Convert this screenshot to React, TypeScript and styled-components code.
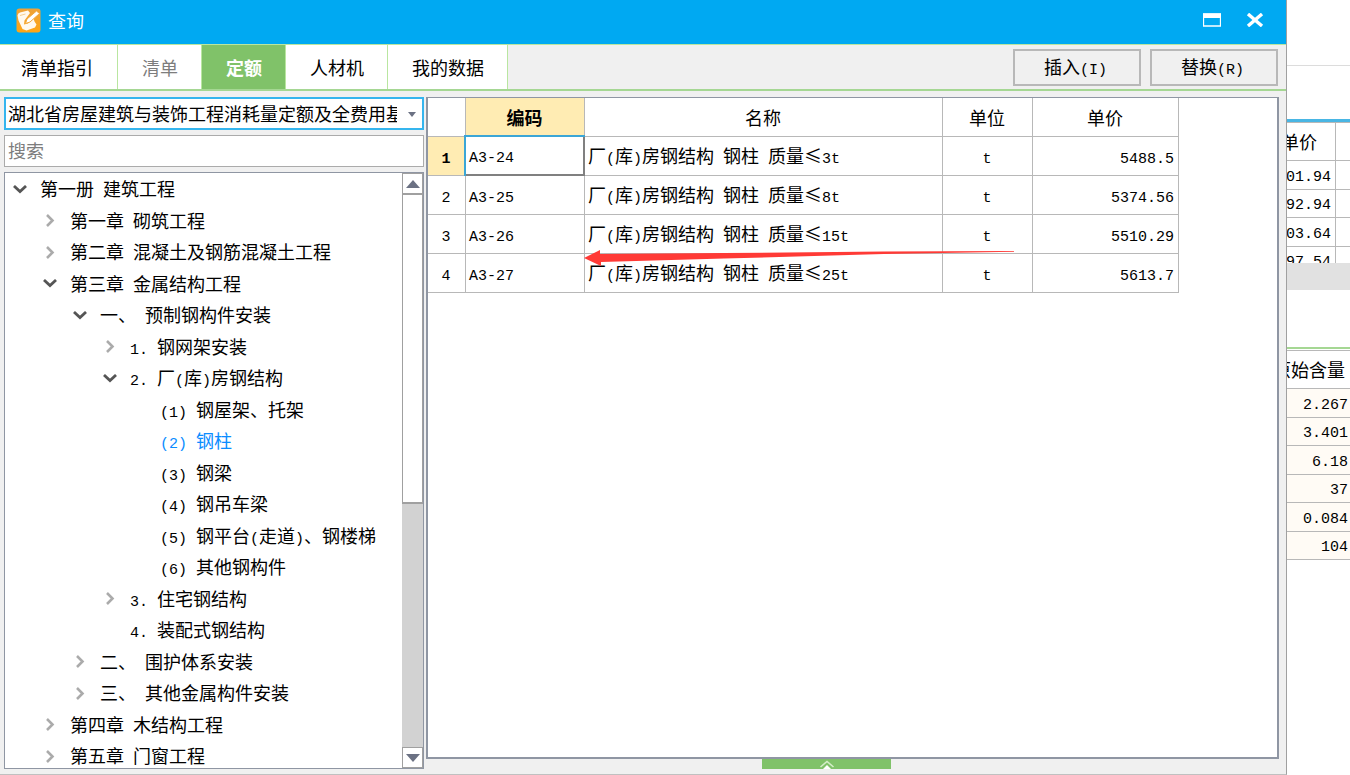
import React from 'react';
import styled, { createGlobalStyle, css } from 'styled-components';

const c = {
  blue: '#00a9f2',
  green: '#80c269',
  lightGreen: '#b9e6a0',
  face: '#f0f0f0',
  line: '#b8b8b8',
  frame: '#8f96a3',
  ink: '#000',
};

const cjk = '"Noto Sans CJK SC", sans-serif';
const mono = '"Liberation Mono", monospace';

const Global = createGlobalStyle`
  *, *::before, *::after { box-sizing: border-box; }
  body { margin: 0; background: #fff; color: ${c.ink}; font: 18px/24px ${cjk}; }
  button, input, select { font: inherit; color: inherit; border-radius: 0; margin: 0; }
`;

const Screen = styled.div`
  display: grid;
  grid-template-columns: minmax(0, 1fr) 63px;
  height: 100vh;
  overflow: hidden;
`;

const Dialog = styled.section`
  display: flex;
  flex-direction: column;
  min-width: 0;
  min-height: 0;
  background: ${c.face};
  border-right: 1px solid #a0a0a0;
  border-bottom: 1px solid #c0c0c0;
`;

const TitleBar = styled.header`
  display: flex;
  align-items: center;
  height: 44px;
  flex: none;
  padding: 0 22px 4px 16px;
  gap: 7px;
  background: ${c.blue};
  color: #fff;
`;

const Title = styled.h1`
  flex: 1;
  margin: 0;
  font-size: 18px;
  font-weight: 400;
`;

const WindowButton = styled.button`
  display: flex;
  padding: 0;
  margin-left: 18px;
  border: 0;
  background: none;
`;

const Toolbar = styled.div`
  display: flex;
  flex: none;
  height: 47px;
  border-top: 1px solid ${c.lightGreen};
  border-bottom: 2px solid #a5d793;
`;

const Tabs = styled.nav`
  display: flex;
  flex: 1;
`;

const Tab = styled.button<{ $active?: boolean; $muted?: boolean }>`
  padding: 0 23px 0 24px;
  border: 0;
  border-right: 1px solid ${c.lightGreen};
  background: #fff;
  white-space: nowrap;
  &:first-child { padding: 0 24px 0 21px; }
  ${p => p.$muted && css`color: #7d7d7d;`}
  ${p => p.$active && css`background: ${c.green}; color: #fff; font-weight: 700;`}
`;

const Actions = styled.div`
  display: flex;
  gap: 9px;
  padding: 4px 8px 3px 0;
`;

const Action = styled.button`
  width: 128px;
  padding: 2px 3px 0 0;
  border: 2px solid ${c.line};
  background: ${c.face};
`;

const Body = styled.div`
  display: grid;
  grid-template-columns: 420px minmax(0, 1fr);
  gap: 2px;
  flex: 1;
  min-height: 0;
  padding: 6px 7px 5px 4px;
`;

const Side = styled.div`
  display: flex;
  flex-direction: column;
  gap: 5px;
  min-height: 0;
`;

const SelectWrap = styled.label`
  position: relative;
  display: block;
  height: 33px;
  flex: none;

  svg { position: absolute; right: 8px; top: 15px; pointer-events: none; }
`;

const Select = styled.select`
  appearance: none;
  width: 100%;
  height: 100%;
  padding: 0 25px 2px 2px;
  border: 2px solid #35b5ee;
  outline: 0;
  background: #fff;
`;

const Search = styled.input`
  width: 100%;
  height: 32px;
  flex: none;
  padding: 0 3px 2px;
  border: 1px solid #ababab;
  outline: 0;
  background: #fff;
  &::placeholder { color: #7d7d7d; opacity: 1; }
`;

const TreePanel = styled.div`
  display: flex;
  flex: 1;
  min-height: 0;
  overflow: hidden;
  border: 1px solid ${c.frame};
  background: #fff;
`;

const Tree = styled.ul`
  display: grid;
  grid-auto-rows: 31px 32px;
  flex: 1;
  margin: 0;
  padding: 2px 0 0;
  list-style: none;
`;

const TreeRow = styled.li<{ $level: number; $selected?: boolean }>`
  display: flex;
  align-items: center;
  padding-left: ${p => 5 + p.$level * 30}px;
  white-space: nowrap;
  color: ${p => (p.$selected ? '#0a8cff' : c.ink)};
`;

const Toggle = styled.span`
  display: flex;
  align-items: center;
  justify-content: center;
  width: 20px;
  height: 20px;
  margin: 0 10px 2px 0;
`;

const ScrollBar = styled.div`
  display: flex;
  flex-direction: column;
  width: 21px;
  background: #d2d2d2;
`;

const ScrollButton = styled.button`
  display: flex;
  align-items: center;
  justify-content: center;
  flex: none;
  height: 21px;
  padding: 0;
  border: 1px solid #a0a0a0;
  background: #fff;
`;

const ScrollTrack = styled.div`
  flex: 1;
`;

const ScrollThumb = styled.div`
  height: 56%;
  border: 1px solid #a0a0a0;
  border-bottom-width: 2px;
  background: #fff;
`;

const Main = styled.div`
  display: flex;
  flex-direction: column;
  min-width: 0;
  min-height: 0;
`;

const GridPanel = styled.div`
  flex: 1;
  min-height: 0;
  border: 2px solid ${c.frame};
  border-top-width: 1px;
  background: #fff;
`;

const Grid = styled.table`
  border-collapse: separate;
  border-spacing: 0;
  table-layout: fixed;
  width: 751px;

  tr { height: 39px; }
`;

const cell = css`
  padding: 2px 4px 0 3px;
  border-right: 1px solid ${c.line};
  border-bottom: 1px solid ${c.line};
  font-weight: 400;
  white-space: nowrap;
`;

const HeadCell = styled.th<{ $width: number; $active?: boolean }>`
  ${cell}
  padding-top: 0;
  padding-bottom: 1px;
  width: ${p => p.$width}px;
  ${p => p.$active && css`background: #ffecb3; font-weight: 700;`}
`;

const RowHead = styled.th<{ $active?: boolean }>`
  ${cell}
  ${p => p.$active && css`background: #ffecb3; font-weight: 700;`}
`;

const Cell = styled.td<{ $align?: 'center' | 'right'; $focus?: boolean }>`
  ${cell}
  text-align: ${p => p.$align || 'left'};
  ${p => p.$focus && css`
    border-right: 2px solid #808080;
    border-bottom: 2px solid #808080;
    box-shadow: -1px -1px 0 1px #3ba6d6;
    clip-path: inset(-2px 0 0 -2px);
  `}
`;

const Handle = styled.button`
  display: flex;
  align-items: flex-end;
  justify-content: center;
  align-self: center;
  flex: none;
  width: 129px;
  height: 10px;
  margin-right: 53px;
  padding: 0 0 0 2px;
  border: 0;
  background: ${c.green};
`;

const Behind = styled.aside`
  display: flex;
  flex-direction: column;
  min-width: 0;
  overflow: hidden;
`;

const Ribbon = styled.div`
  flex: none;
  height: 66px;
  border-bottom: 1px solid #dcdcdc;
`;

const Blank = styled.div`
  flex: none;
  height: 53px;
`;

const Prices = styled.div`
  flex: none;
  height: 144px;
  overflow: hidden;
  border-top: 3px solid #49b6e4;
`;

const Splitter = styled.div`
  flex: none;
  height: 27px;
  background: #e1e1e1;
`;

const Gap = styled.div`
  flex: none;
  height: 57px;
`;

const Amounts = styled.div`
  border-top: 2px solid #a5d793;
  padding-top: 1px;
`;

const SmallGrid = styled.table<{ $tint?: boolean }>`
  width: 100%;
  table-layout: fixed;
  border-collapse: separate;
  border-spacing: 0;
  border-top: 1px solid ${c.line};

  tr { height: 29px; }
  tr:nth-child(even) { height: 28px; }
  thead tr { height: 38px; }
  th, td { padding: 0; border-bottom: 1px solid ${c.line}; font-weight: 400; }
  th { padding-bottom: 2px; }
  td { background: ${p => (p.$tint ? '#fffbf5' : '#fff')}; }
`;

const SideCell = styled.div<{ $pad: number }>`
  display: flex;
  align-items: center;
  justify-content: flex-end;
  height: 27px;
  padding-right: ${p => p.$pad}px;
  overflow: hidden;
  white-space: nowrap;
`;

const Edge = styled.col`
  width: 14px;
`;

const PriceTable = styled(SmallGrid)`
  th:first-child, td:first-child { border-right: 1px solid ${c.line}; }
`;

const Half = styled.span`
  font-family: ${mono};
  font-size: 15px;
  white-space: pre;
`;

/* Half-width characters take exactly half the advance of a Chinese one. */
function Text({ children }: { children: string }) {
  return (
    <span>
      {children.split(/([\x20-\x7e]+)/).filter(Boolean).map((part, i) =>
        /^[\x20-\x7e]/.test(part) ? <Half key={i}>{part}</Half> : <span key={i}>{part}</span>,
      )}
    </span>
  );
}

function AppIcon() {
  return (
    <svg width="25" height="25" viewBox="0 0 25 25" aria-hidden="true">
      <defs>
        <linearGradient id="badge" x1="0" y1="0" x2="0" y2="1">
          <stop offset="0" stopColor="#eda239" />
          <stop offset="1" stopColor="#ffa514" />
        </linearGradient>
      </defs>
      <rect x="0.5" y="0.5" width="24" height="24" rx="3" fill="url(#badge)" />
      <path d="M1.500 7.500Q2 5 4 4.500L12 2.500 14 5 8.500 12.500 8 16.500 12 15.500 17.500 10.500 18.500 13.500 20.500 16.500 19 19.500 10.500 22.500 6.500 21 2.500 12.500Z" fill="#fff9ee" />
      <path d="M9.500 15.500 11 11 20.500 3 23.500 5.500 14 14Z" fill="#fff" stroke="#f3a93c" strokeWidth="1" />
      <path d="M4 7.500 9.500 6" fill="none" stroke="#f8cf8e" strokeWidth="1" />
    </svg>
  );
}

function Chevron({ open }: { open: boolean }) {
  return open ? (
    <svg width="14" height="10" viewBox="0 0 14 10" aria-hidden="true">
      <path d="M1 1 7 6.500 13 1" fill="none" stroke="#555" strokeWidth="2.800" />
    </svg>
  ) : (
    <svg width="10" height="14" viewBox="0 0 10 14" aria-hidden="true">
      <path d="M2 1 7.500 6.500 2 12" fill="none" stroke="#ababab" strokeWidth="2.600" />
    </svg>
  );
}

function Arrow({ up, small }: { up?: boolean; small?: boolean }) {
  return (
    <svg width={small ? 8 : 14} height={small ? 5 : 8} viewBox="0 0 14 8" preserveAspectRatio="none" aria-hidden="true">
      <path d={up ? 'M0 8 7 0l7 8Z' : 'M0 0h14L7 8Z'} fill="#6b7183" />
    </svg>
  );
}

type Node = { level: number; text: string; open?: boolean; selected?: boolean };

const tree: Node[] = [
  { level: 0, text: '第一册 建筑工程', open: true },
  { level: 1, text: '第一章 砌筑工程', open: false },
  { level: 1, text: '第二章 混凝土及钢筋混凝土工程', open: false },
  { level: 1, text: '第三章 金属结构工程', open: true },
  { level: 2, text: '一、 预制钢构件安装', open: true },
  { level: 3, text: '1. 钢网架安装', open: false },
  { level: 3, text: '2. 厂(库)房钢结构', open: true },
  { level: 4, text: '(1) 钢屋架、托架' },
  { level: 4, text: '(2) 钢柱', selected: true },
  { level: 4, text: '(3) 钢梁' },
  { level: 4, text: '(4) 钢吊车梁' },
  { level: 4, text: '(5) 钢平台(走道)、钢楼梯' },
  { level: 4, text: '(6) 其他钢构件' },
  { level: 3, text: '3. 住宅钢结构', open: false },
  { level: 3, text: '4. 装配式钢结构' },
  { level: 2, text: '二、 围护体系安装', open: false },
  { level: 2, text: '三、 其他金属构件安装', open: false },
  { level: 1, text: '第四章 木结构工程', open: false },
  { level: 1, text: '第五章 门窗工程', open: false },
];

const items = [
  { code: 'A3-24', name: '厂(库)房钢结构 钢柱 质量≤3t', unit: 't', price: '5488.5' },
  { code: 'A3-25', name: '厂(库)房钢结构 钢柱 质量≤8t', unit: 't', price: '5374.56' },
  { code: 'A3-26', name: '厂(库)房钢结构 钢柱 质量≤15t', unit: 't', price: '5510.29' },
  { code: 'A3-27', name: '厂(库)房钢结构 钢柱 质量≤25t', unit: 't', price: '5613.7' },
];

const prices = ['01.94', '92.94', '03.64', '97.54'];
const amounts = ['2.267', '3.401', '6.18', '37', '0.084', '104'];

const Pointer = styled.svg`
  position: absolute;
  left: 584px;
  top: 249px;
  pointer-events: none;
`;

export default function App() {
  return (
    <Screen>
      <Global />
      <Dialog aria-label="查询">
        <TitleBar>
          <AppIcon />
          <Title>查询</Title>
          <WindowButton aria-label="最大化">
            <svg width="18" height="14" viewBox="0 0 18 14">
              <path d="M0.500 1h17v12h-17Z" fill="none" stroke="#fff" strokeWidth="1.300" />
              <path d="M0 0.500h18V5H0Z" fill="#fff" />
            </svg>
          </WindowButton>
          <WindowButton aria-label="关闭">
            <svg width="18" height="14" viewBox="0 0 18 14">
              <path d="M2 1 16 13M16 1 2 13" fill="none" stroke="#fff" strokeWidth="3.400" />
            </svg>
          </WindowButton>
        </TitleBar>

        <Toolbar>
          <Tabs>
            <Tab>清单指引</Tab>
            <Tab $muted>清单</Tab>
            <Tab $active>定额</Tab>
            <Tab>人材机</Tab>
            <Tab>我的数据</Tab>
          </Tabs>
          <Actions>
            <Action><Text>插入(I)</Text></Action>
            <Action><Text>替换(R)</Text></Action>
          </Actions>
        </Toolbar>

        <Body>
          <Side>
            <SelectWrap>
              <Select aria-label="定额库">
                <option>湖北省房屋建筑与装饰工程消耗量定额及全费用基</option>
              </Select>
              <Arrow small />
            </SelectWrap>
            <Search type="text" placeholder="搜索" aria-label="搜索" />
            <TreePanel>
              <Tree>
                {tree.map(n => (
                  <TreeRow key={n.text} $level={n.level} $selected={n.selected}>
                    <Toggle>{n.open !== undefined && <Chevron open={n.open} />}</Toggle>
                    <Text>{n.text}</Text>
                  </TreeRow>
                ))}
              </Tree>
              <ScrollBar>
                <ScrollButton aria-label="向上"><Arrow up /></ScrollButton>
                <ScrollTrack><ScrollThumb /></ScrollTrack>
                <ScrollButton aria-label="向下"><Arrow /></ScrollButton>
              </ScrollBar>
            </TreePanel>
          </Side>

          <Main>
            <GridPanel>
              <Grid>
                <thead>
                  <tr>
                    <HeadCell $width={38} aria-label="序号" />
                    <HeadCell $width={119} $active>编码</HeadCell>
                    <HeadCell $width={358}>名称</HeadCell>
                    <HeadCell $width={90}>单位</HeadCell>
                    <HeadCell $width={146}>单价</HeadCell>
                  </tr>
                </thead>
                <tbody>
                  {items.map((it, i) => (
                    <tr key={it.code}>
                      <RowHead $active={i === 0}><Text>{String(i + 1)}</Text></RowHead>
                      <Cell $focus={i === 0}><Text>{it.code}</Text></Cell>
                      <Cell><Text>{it.name}</Text></Cell>
                      <Cell $align="center"><Text>{it.unit}</Text></Cell>
                      <Cell $align="right"><Text>{it.price}</Text></Cell>
                    </tr>
                  ))}
                </tbody>
              </Grid>
            </GridPanel>
            <Handle aria-label="展开">
              <svg width="16" height="9" viewBox="0 0 16 9">
                <path d="M1.500 7 8 1.500 14.500 7" fill="none" stroke="#d4edc9" strokeWidth="1.600" />
                <path d="M4 9 8 5l4 4Z" fill="#fff" />
              </svg>
            </Handle>
          </Main>
        </Body>
      </Dialog>

      <Behind>
        <Ribbon />
        <Blank />
        <Prices>
          <PriceTable>
            <colgroup><col /><Edge /></colgroup>
            <thead>
              <tr><th><SideCell $pad={18}>单价</SideCell></th><th /></tr>
            </thead>
            <tbody>
              {prices.map(v => (
                <tr key={v}><td><SideCell $pad={4}><Text>{v}</Text></SideCell></td><td /></tr>
              ))}
            </tbody>
          </PriceTable>
        </Prices>
        <Splitter />
        <Gap />
        <Amounts>
          <SmallGrid $tint>
            <thead>
              <tr><th><SideCell $pad={5}>原始含量</SideCell></th></tr>
            </thead>
            <tbody>
              {amounts.map(v => (
                <tr key={v}><td><SideCell $pad={2}><Text>{v}</Text></SideCell></td></tr>
              ))}
            </tbody>
          </SmallGrid>
        </Amounts>
      </Behind>

      <Pointer width="432" height="20" viewBox="0 0 432 20" aria-hidden="true">
        <path d="M0 9 16 1v4L140 4 300 2.500 430 2v0.700L300 5 140 9.500 17 13v4Z" fill="#ff3a36" />
      </Pointer>
    </Screen>
  );
}
